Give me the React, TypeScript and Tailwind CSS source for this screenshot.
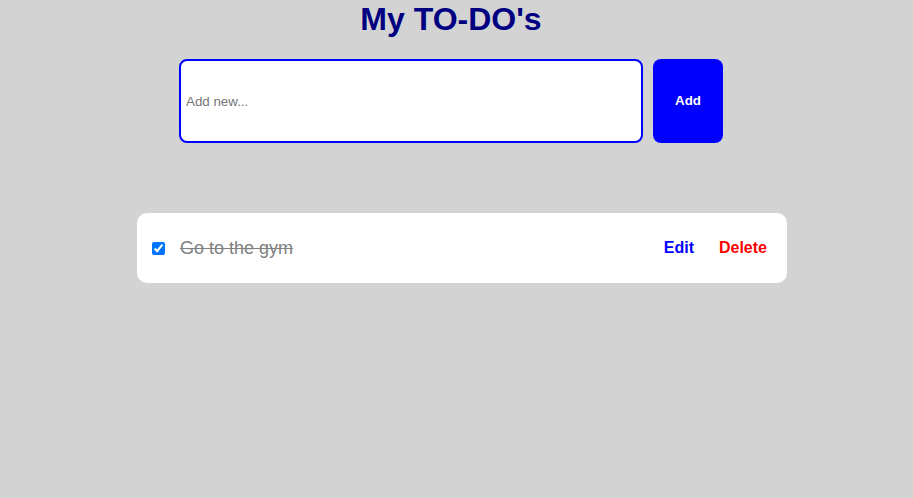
import React from "react";

export default function App() {
  return (
    <div className="min-h-[498px] w-full bg-[#d3d3d3] font-['Liberation_Sans',Arial,sans-serif]">
      <h1 className="pt-[1px] pl-[-0px] text-center text-[32px] font-bold leading-[37px] text-[#000080] mr-[11px]">
        My TO-DO's
      </h1>
      <div className="mt-[21px] ml-[179px] flex gap-[10px]">
        <input
          type="text"
          placeholder="Add new..."
          className="h-[84px] w-[464px] rounded-[8px] border-2 border-[#0000ff] bg-white px-[5px] text-[13.33px] text-black outline-none placeholder:text-[#757575]"
        />
        <button className="h-[84px] w-[70px] rounded-[8px] bg-[#0000ff] text-[13.33px] font-bold text-white">
          Add
        </button>
      </div>
      <div className="mt-[70px] ml-[137px] flex h-[70px] w-[650px] items-center rounded-[10px] bg-white pl-[15px] pr-[20px]">
        <input
          type="checkbox"
          defaultChecked
          className="m-0 h-[13px] w-[13px] accent-[#0075ff]"
        />
        <span className="ml-[15px] text-[18px] text-[#808080] line-through">
          Go to the gym
        </span>
        <div className="ml-auto flex items-center gap-[25px] text-[16px] font-bold">
          <span className="text-[#0000ff]">Edit</span>
          <span className="text-[#ff0000]">Delete</span>
        </div>
      </div>
    </div>
  );
}
